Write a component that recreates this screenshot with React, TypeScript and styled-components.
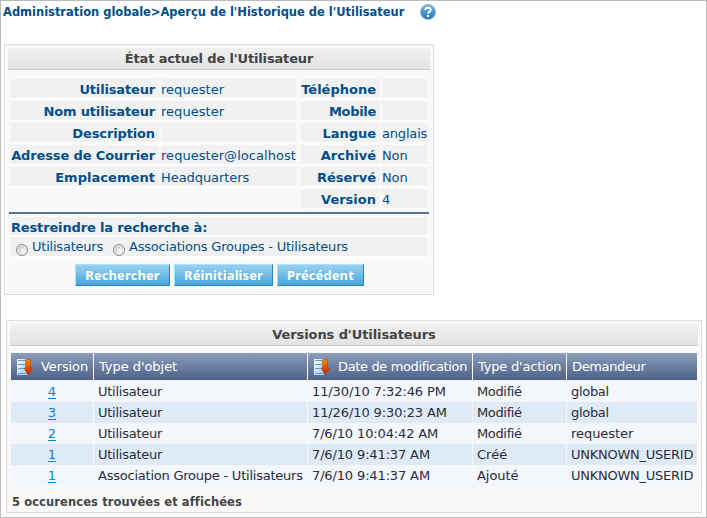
import React from 'react';
import styled, { createGlobalStyle } from 'styled-components';

const GlobalStyle = createGlobalStyle`
  * { box-sizing: border-box; }
  body { margin: 0; background: #fff; }
`;

const Page = styled.div`
  width: 707px;
  height: 518px;
  border: 1px solid #bbb;
  font: 13px/18px Verdana, "DejaVu Sans", sans-serif;
  color: #004f8b;
  white-space: nowrap;
  overflow: hidden;
`;

const Text = styled.span<{ $track?: number }>`
  letter-spacing: ${(p) => p.$track ?? 0}px;
`;

const Breadcrumb = styled.div`
  display: flex;
  align-items: center;
  height: 22px;
  padding-left: 2px;
  font-size: 11.5px;
  font-weight: bold;
`;

const HelpSvg = styled.svg`
  display: block;
  margin-left: 15px;
`;

const Panel = styled.section<{ $wide?: boolean }>`
  width: ${(p) => (p.$wide ? 696 : 430)}px;
  height: ${(p) => (p.$wide ? 193 : 251)}px;
  margin: ${(p) => (p.$wide ? '25px 0 0 5px' : '21px 0 0 3px')};
  padding: 3px;
  border: 1px solid #ddd;
  background: #f9f9f9;
`;

const PanelTitle = styled.h2`
  margin: 0;
  height: 22px;
  border-bottom: 1px solid #c9c9c9;
  background: linear-gradient(#f0f0f0, #e3e3e3);
  color: #444;
  font-size: 13px;
  line-height: 21px;
  text-align: center;
`;

const Details = styled.div`
  display: flex;
  gap: 5px;
  margin: 9px 0 0 3px;
  height: 133px;
`;

const DetailGrid = styled.dl<{ $columns: string }>`
  display: grid;
  grid-template-columns: ${(p) => p.$columns};
  grid-auto-rows: 20px;
  align-content: start;
  gap: 2px;
  margin: 0;
`;

const Term = styled.dt`
  padding-right: 4px;
  border-bottom: 1px solid #fff;
  background: #f1f1f1;
  font-weight: bold;
  line-height: 21px;
  text-align: right;
`;

const Value = styled.dd`
  margin: 0;
  border-bottom: 1px solid #fff;
  background: #f1f1f1;
  line-height: 21px;
`;

const Rule = styled.div`
  height: 2px;
  margin: 0 0 3px 1px;
  width: 420px;
  background: #5b7196;
`;

const FilterRow = styled.div<{ $height: number; $bold?: boolean }>`
  display: flex;
  height: ${(p) => p.$height}px;
  width: 416px;
  margin: 0 0 1px 3px;
  border-bottom: 1px solid #fff;
  background: #f1f1f1;
  font-weight: ${(p) => (p.$bold ? 'bold' : 'normal')};
  line-height: 22px;
`;

const Option = styled.label<{ $start: number }>`
  display: flex;
  margin-left: ${(p) => p.$start}px;
  line-height: 20px;
`;

const Radio = styled.input`
  appearance: none;
  width: 12px;
  height: 12px;
  margin: 7px 4px 0 0;
  border: 1px solid #8e8f8f;
  border-radius: 50%;
  background: radial-gradient(circle at 62% 62%, #f5f5f5 0 15%, #b9bdc2 75%);
  box-shadow: inset 0 0 0 1px #f4f4f4;
`;

const Buttons = styled.div`
  display: flex;
  gap: 4px;
  margin: 7px 0 0 67px;
`;

const Button = styled.button<{ $width: number }>`
  width: ${(p) => p.$width}px;
  height: 22px;
  padding: 0;
  border: 1px solid;
  border-color: #a8e2fa #2088c8 #2088c8 #a8e2fa;
  background: linear-gradient(#9ad0f0, #48a5dc);
  color: #fff;
  font: bold 13px/19px "Noto Sans", sans-serif;
  letter-spacing: 0.1px;
  text-align: center;
`;

const Table = styled.div`
  margin: 7px 1px 0 1px;
`;

const Row = styled.div`
  display: grid;
  grid-template-columns: 82px 213px 164px 93px 130px;
  column-gap: 1px;
`;

const HeadRow = styled(Row)`
  height: 27px;
`;

const HeadCell = styled.div`
  display: flex;
  align-items: center;
  padding-left: 5px;
  background: linear-gradient(#8c9dbd, #4b5f83);
  color: #fff;
  line-height: 28px;
`;

const SortSvg = styled.svg`
  display: block;
  margin: 1px 8px 0 0;
`;

const BodyRow = styled(Row)<{ $alt: boolean; $height: number }>`
  height: ${(p) => p.$height}px;
  color: #2b2b3a;

  & > div {
    padding-left: 4px;
    border-bottom: 1px solid #f9fbfd;
    background: ${(p) => (p.$alt ? '#deebf6' : '#f3f6fb')};
    line-height: ${(p) => p.$height + 1}px;
  }
`;

const LinkCell = styled.div`
  text-align: center;
`;

const Link = styled.a`
  margin-right: 4px;
  color: #0a84cc;
  text-decoration: underline;
  text-underline-offset: 2px;
`;

const Footer = styled.div`
  height: 25px;
  padding-left: 2px;
  border-top: 1px solid #d6d6d6;
  color: #444;
  font-size: 11.5px;
  font-weight: bold;
  line-height: 31px;
`;

function HelpIcon() {
  return (
    <HelpSvg width="18" height="18" viewBox="0 0 18 18">
      <defs>
        <linearGradient id="help" x1="0" y1="0" x2="0" y2="1">
          <stop offset="0" stopColor="#72b5e6" />
          <stop offset="1" stopColor="#2475bd" />
        </linearGradient>
      </defs>
      <circle cx="9" cy="9" r="7.6" fill="url(#help)" stroke="#a5bdd0" />
      <path d="M6.3 7.1C6.4 3.9 11.7 4 11.7 7c0 1.8-2.6 1.7-2.6 3.8" fill="none" stroke="#fff" strokeWidth="2" />
      <rect x="8" y="12" width="2.2" height="2.1" fill="#fff" />
    </HelpSvg>
  );
}

function SortIcon() {
  return (
    <SortSvg width="17" height="17" viewBox="0 0 17 17">
      <defs>
        <linearGradient id="sheet" x1="0" y1="0" x2="1" y2="1">
          <stop offset="0" stopColor="#fff" />
          <stop offset="1" stopColor="#8cc8fb" />
        </linearGradient>
        <linearGradient id="arrow" x1="0" y1="0" x2="0" y2="1">
          <stop offset="0" stopColor="#f28a00" />
          <stop offset="1" stopColor="#c91e00" />
        </linearGradient>
      </defs>
      <rect x="1" y="0" width="11" height="16" fill="url(#sheet)" />
      <path d="M2 1.500h7M2 5.500h7M2 9.500h6M2 14.500h8" stroke="#7396b8" />
      <path d="M9.500.5h5v8.500H17l-5 7-4-7h1.500z" fill="url(#arrow)" stroke="#a34512" strokeWidth=".5" />
    </SortSvg>
  );
}

type Detail = [string, number, string, number];

const identity: Detail[] = [
  ['Utilisateur', -0.16, 'requester', 0.03],
  ['Nom utilisateur', -0.16, 'requester', 0.03],
  ['Description', -0.13, '', 0],
  ['Adresse de Courrier', -0.13, 'requester@localhost', 0.04],
  ['Emplacement', 0.05, 'Headquarters', -0.07],
];

const status: Detail[] = [
  ['Téléphone', 0, '', 0],
  ['Mobile', -0.3, '', 0],
  ['Langue', -0.05, 'anglais', -0.18],
  ['Archivé', 0, 'Non', -0.1],
  ['Réservé', 0, 'Non', -0.1],
  ['Version', 0, '4', 0],
];

type Version = [string, string, number, string, number, string, number, string, number];

const versions: Version[] = [
  ['4', 'Utilisateur', -0.25, '11/30/10 7:32:46 PM', -0.1, 'Modifié', -0.35, 'global', -0.3],
  ['3', 'Utilisateur', -0.25, '11/26/10 9:30:23 AM', -0.1, 'Modifié', -0.35, 'global', -0.3],
  ['2', 'Utilisateur', -0.25, '7/6/10 10:04:42 AM', -0.14, 'Modifié', -0.35, 'requester', -0.05],
  ['1', 'Utilisateur', -0.25, '7/6/10 9:41:37 AM', -0.14, 'Créé', 0, 'UNKNOWN_USERID', -0.25],
  ['1', 'Association Groupe - Utilisateurs', -0.23, '7/6/10 9:41:37 AM', -0.14, 'Ajouté', -0.05, 'UNKNOWN_USERID', -0.25],
];

function DetailList({ columns, items }: { columns: string; items: Detail[] }) {
  return (
    <DetailGrid $columns={columns}>
      {items.map(([term, termTrack, value, valueTrack]) => (
        <React.Fragment key={term}>
          <Term><Text $track={termTrack}>{term}</Text></Term>
          <Value><Text $track={valueTrack}>{value}</Text></Value>
        </React.Fragment>
      ))}
    </DetailGrid>
  );
}

export default function App() {
  return (
    <>
      <GlobalStyle />
      <Page>
        <Breadcrumb>
          <Text $track={-0.02}>Administration globale&gt;Aperçu de l'Historique de l'Utilisateur</Text>
          <HelpIcon />
        </Breadcrumb>

        <Panel>
          <PanelTitle><Text $track={-0.16}>État actuel de l'Utilisateur</Text></PanelTitle>
          <Details>
            <DetailList columns="148px 135px" items={identity} />
            <DetailList columns="79px 45px" items={status} />
          </Details>
          <Rule />
          <FilterRow $height={19} $bold>
            <Text $track={-0.15}>Restreindre la recherche à:</Text>
          </FilterRow>
          <FilterRow $height={20}>
            <Option $start={5}>
              <Radio type="radio" name="scope" />
              <Text $track={-0.22}>Utilisateurs</Text>
            </Option>
            <Option $start={10}>
              <Radio type="radio" name="scope" />
              <Text $track={-0.2}>Associations Groupes - Utilisateurs</Text>
            </Option>
          </FilterRow>
          <Buttons>
            <Button $width={95}>Rechercher</Button>
            <Button $width={99}>Réinitialiser</Button>
            <Button $width={87}>Précédent</Button>
          </Buttons>
        </Panel>

        <Panel $wide>
          <PanelTitle><Text $track={-0.1}>Versions d'Utilisateurs</Text></PanelTitle>
          <Table>
            <HeadRow>
              <HeadCell><SortIcon /><Text $track={-0.1}>Version</Text></HeadCell>
              <HeadCell><Text $track={-0.05}>Type d'objet</Text></HeadCell>
              <HeadCell><SortIcon /><Text $track={-0.36}>Date de modification</Text></HeadCell>
              <HeadCell><Text $track={-0.2}>Type d'action</Text></HeadCell>
              <HeadCell><Text $track={-0.36}>Demandeur</Text></HeadCell>
            </HeadRow>
            {versions.map(([id, type, typeTrack, date, dateTrack, action, actionTrack, who, whoTrack], i) => (
              <BodyRow key={i} $alt={i % 2 === 1} $height={i === 0 ? 22 : 21}>
                <LinkCell><Link href="#">{id}</Link></LinkCell>
                <div><Text $track={typeTrack}>{type}</Text></div>
                <div><Text $track={dateTrack}>{date}</Text></div>
                <div><Text $track={actionTrack}>{action}</Text></div>
                <div><Text $track={whoTrack}>{who}</Text></div>
              </BodyRow>
            ))}
          </Table>
          <Footer><Text $track={0.1}>5 occurences trouvées et affichées</Text></Footer>
        </Panel>
      </Page>
    </>
  );
}
